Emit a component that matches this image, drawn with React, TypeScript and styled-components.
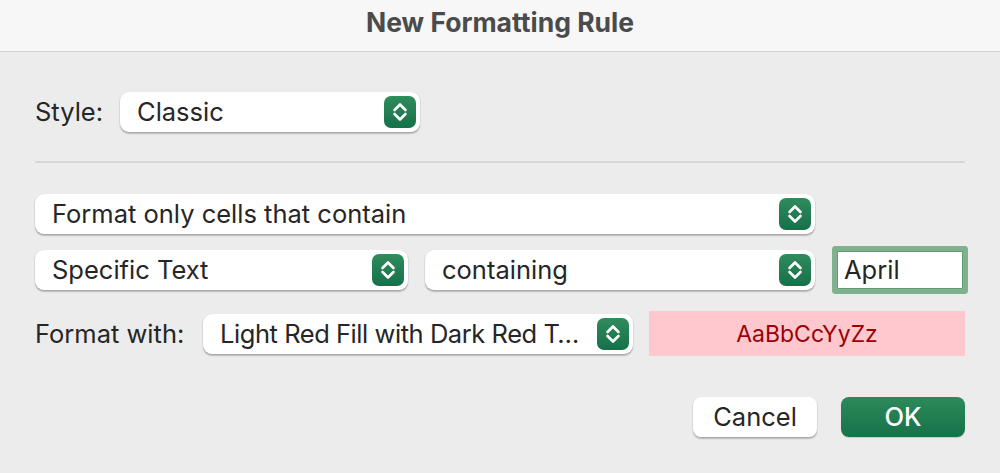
import React from "react";
import styled, { createGlobalStyle } from "styled-components";

const Global = createGlobalStyle`
  html, body { margin: 0; padding: 0; background: #ececec; }
  body { font-family: Inter, "Noto Sans", "Liberation Sans", sans-serif; -webkit-font-smoothing: antialiased; }
  * { box-sizing: border-box; }
`;

const Dialog = styled.div`
  width: 1000px;
  height: 473px;
  background: #ececec;
  display: flex;
  flex-direction: column;
  overflow: hidden;
`;

const TitleBar = styled.div`
  height: 52px;
  flex: none;
  background: #f7f7f7;
  border-bottom: 1px solid #d4d4d4;
  display: flex;
  align-items: center;
  justify-content: center;
  font-size: 26.5px;
  font-weight: 700;
  color: #4b4b4b;
  padding-bottom: 7px;
`;

const Body = styled.div`
  padding: 40px 35px 0;
  display: flex;
  flex-direction: column;
`;

const Row = styled.div<{ $mt?: number }>`
  display: flex;
  align-items: center;
  margin-top: ${(p) => p.$mt ?? 0}px;
`;

const Label = styled.span<{ $w: number }>`
  width: ${(p) => p.$w}px;
  flex: none;
  font-size: 25.5px;
  line-height: 32px;
  color: #262626;
`;

const Popup = styled.div<{ $w: number }>`
  width: ${(p) => p.$w}px;
  height: 40px;
  flex: none;
  background: #ffffff;
  border-radius: 9px;
  box-shadow: 0 0.5px 0 0.5px rgba(0, 0, 0, 0.08), 0 1.5px 1.5px rgba(0, 0, 0, 0.22);
  display: flex;
  align-items: center;
  justify-content: space-between;
  gap: 4px;
  padding: 0 4px 0 17px;
  font-size: 25.5px;
  line-height: 32px;
  color: #262626;
`;

const PopupText = styled.span<{ $tight?: boolean }>`
  white-space: nowrap;
  letter-spacing: ${(p) => (p.$tight ? "-0.45px" : "0")};
`;

const Stepper = styled.div`
  width: 32px;
  height: 32px;
  border-radius: 7px;
  background: linear-gradient(#2f8c5c, #16704a);
  display: flex;
  align-items: center;
  justify-content: center;
  flex: none;
`;

const Separator = styled.div`
  height: 2px;
  background: #d6d6d6;
  margin-top: 29px;
`;

const TextField = styled.div`
  width: 126px;
  height: 38px;
  margin-left: 22px;
  background: #ffffff;
  border: 1px solid #5f9a70;
  border-radius: 1px;
  box-shadow: 0 0 0 5px #80b18e;
  display: flex;
  align-items: center;
  padding-left: 6px;
  font-size: 25.5px;
  line-height: 32px;
  color: #262626;
`;

const Preview = styled.div`
  width: 316px;
  height: 45px;
  margin-left: 16px;
  background: #ffc7ce;
  color: #9c0006;
  font-size: 23px;
  line-height: 32px;
  display: flex;
  align-items: center;
  justify-content: center;
`;

const Buttons = styled.div`
  display: flex;
  justify-content: flex-end;
  gap: 24px;
  margin-top: 41px;
`;

const Button = styled.div<{ $primary?: boolean }>`
  width: 124px;
  height: 40px;
  border-radius: 8px;
  display: flex;
  align-items: center;
  justify-content: center;
  font-size: 25.5px;
  line-height: 32px;
  font-weight: ${(p) => (p.$primary ? 500 : 400)};
  color: ${(p) => (p.$primary ? "#ffffff" : "#262626")};
  background: ${(p) => (p.$primary ? "linear-gradient(#2c8a5a, #17714a)" : "#ffffff")};
  box-shadow: ${(p) =>
    p.$primary
      ? "0 1px 1px rgba(0,0,0,0.15)"
      : "0 0.5px 0 0.5px rgba(0,0,0,0.08), 0 1.5px 1.5px rgba(0,0,0,0.22)"};
`;

const Spacer = styled.div<{ $w: number }>`
  width: ${(p) => p.$w}px;
  flex: none;
`;

const Chevrons = () => (
  <svg width="32" height="32" viewBox="0 0 32 32" fill="none">
    <path d="M10.5 14 L16 8.5 L21.5 14" stroke="#fff" strokeWidth="2.6" strokeLinecap="round" strokeLinejoin="round" />
    <path d="M10.5 18 L16 23.5 L21.5 18" stroke="#fff" strokeWidth="2.6" strokeLinecap="round" strokeLinejoin="round" />
  </svg>
);

const Select = ({ w, text, tight }: { w: number; text: string; tight?: boolean }) => (
  <Popup $w={w}>
    <PopupText $tight={tight}>{text}</PopupText>
    <Stepper>
      <Chevrons />
    </Stepper>
  </Popup>
);

export default function App() {
  return (
    <>
      <Global />
      <Dialog>
        <TitleBar>New Formatting Rule</TitleBar>
        <Body>
          <Row>
            <Label $w={85}>Style:</Label>
            <Select w={300} text="Classic" />
          </Row>
          <Separator />
          <Row $mt={31}>
            <Select w={780} text="Format only cells that contain" />
          </Row>
          <Row $mt={16}>
            <Select w={373} text="Specific Text" />
            <Spacer $w={17} />
            <Select w={390} text="containing" />
            <TextField>April</TextField>
          </Row>
          <Row $mt={21}>
            <Label $w={168}>Format with:</Label>
            <Select w={430} text="Light Red Fill with Dark Red T…" tight />
            <Preview>AaBbCcYyZz</Preview>
          </Row>
          <Buttons>
            <Button>Cancel</Button>
            <Button $primary>OK</Button>
          </Buttons>
        </Body>
      </Dialog>
    </>
  );
}
